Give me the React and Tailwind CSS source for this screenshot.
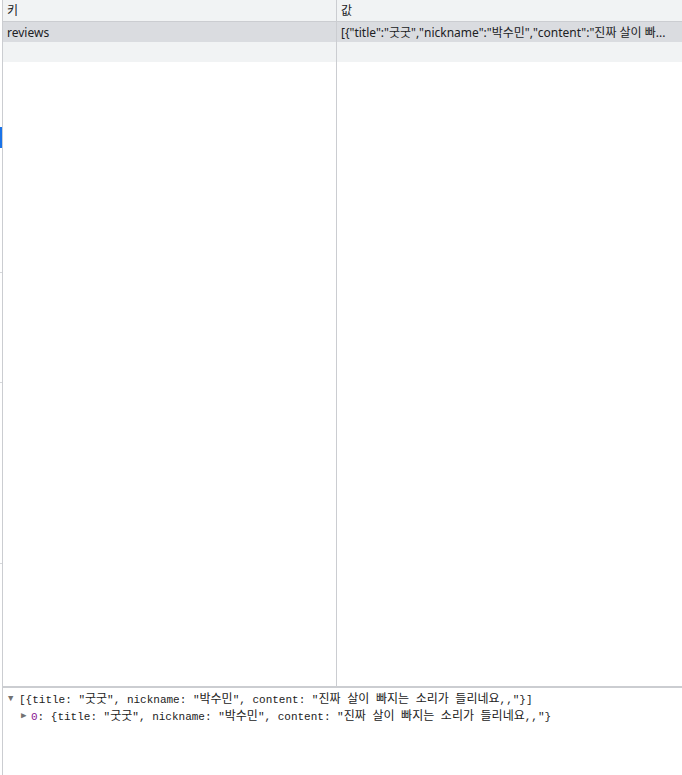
import React from 'react';

// Hangul runs get their own span so they keep a 12px advance next to the mono text
const mono = (text) =>
  text.split(/([\uac00-\ud7a3]+)/).map((part, i) =>
    i % 2 === 1 ? (
      <span key={i} className="text-[12px] leading-[14px] font-['Noto_Sans_CJK_KR',sans-serif]">{part}</span>
    ) : (
      part
    )
  );

const preview = '{title: "굿굿", nickname: "박수민", content: "진짜 살이 빠지는 소리가 들리네요,,"}';

const rows = [
  { key: 'reviews', value: '[{"title":"굿굿","nickname":"박수민","content":"진짜 살이 빠...', selected: true },
  { key: '', value: '', striped: true },
];

export default function App() {
  return (
    <div className="relative w-[682px] h-[775px] bg-white flex overflow-hidden font-['Noto_Sans','Noto_Sans_CJK_KR',sans-serif] text-[12px] text-[#202124]">
      {/* left gutter with the blue focus mark */}
      <div className="relative w-[2px] shrink-0">
        <div className="absolute left-0 top-[127px] h-[21px] w-[2px] bg-[#1a73e8]" />
        <div className="absolute left-0 top-[272px] h-px w-[2px] bg-[#d5d7da]" />
        <div className="absolute left-0 top-[382px] h-px w-[2px] bg-[#d5d7da]" />
        <div className="absolute left-0 top-[563px] h-px w-[2px] bg-[#d5d7da]" />
      </div>
      <div className="flex-1 flex flex-col border-l border-[#cbcdd1] min-w-0">
        {/* storage table */}
        <div className="h-[686px] flex flex-col">
          <div className="grid grid-cols-[334px_1fr] h-[22px] bg-[#f1f3f4] border-b border-[#cbcdd1] leading-[22px]">
            <div className="pl-[4px] border-r border-[#cbcdd1]">키</div>
            <div className="pl-[4px]">값</div>
          </div>
          {rows.map((row, i) => (
            <div
              key={i}
              className={
                'grid grid-cols-[334px_1fr] h-[20px] leading-[22px] ' +
                (row.selected ? 'bg-[#dadce0]' : row.striped ? 'bg-[#f1f3f4]' : '')
              }
            >
              <div className="pl-[4px] border-r border-[#cbcdd1] truncate">{row.key}</div>
              <div className="pl-[4px] whitespace-nowrap overflow-hidden">{row.value}</div>
            </div>
          ))}
          <div className="flex-1 grid grid-cols-[334px_1fr]">
            <div className="border-r border-[#cbcdd1]" />
            <div />
          </div>
        </div>
        {/* console preview */}
        <div className="flex-1 border-t-2 border-[#cbcdd1] pt-[3px] font-['Liberation_Mono',monospace] text-[11px] text-[#222] whitespace-nowrap">
          <div className="flex items-center h-[17px] pl-[5px]">
            <span className="w-[11px] text-[9px] text-[#727272]">▼</span>
            <span>{mono('[' + preview + ']')}</span>
          </div>
          <div className="flex items-center h-[17px] pl-[18px]">
            <span className="w-[10px] text-[9px] text-[#727272]">▶</span>
            <span>
              <span className="text-[#881391]">0</span>
              {mono(': ' + preview)}
            </span>
          </div>
        </div>
      </div>
    </div>
  );
}
